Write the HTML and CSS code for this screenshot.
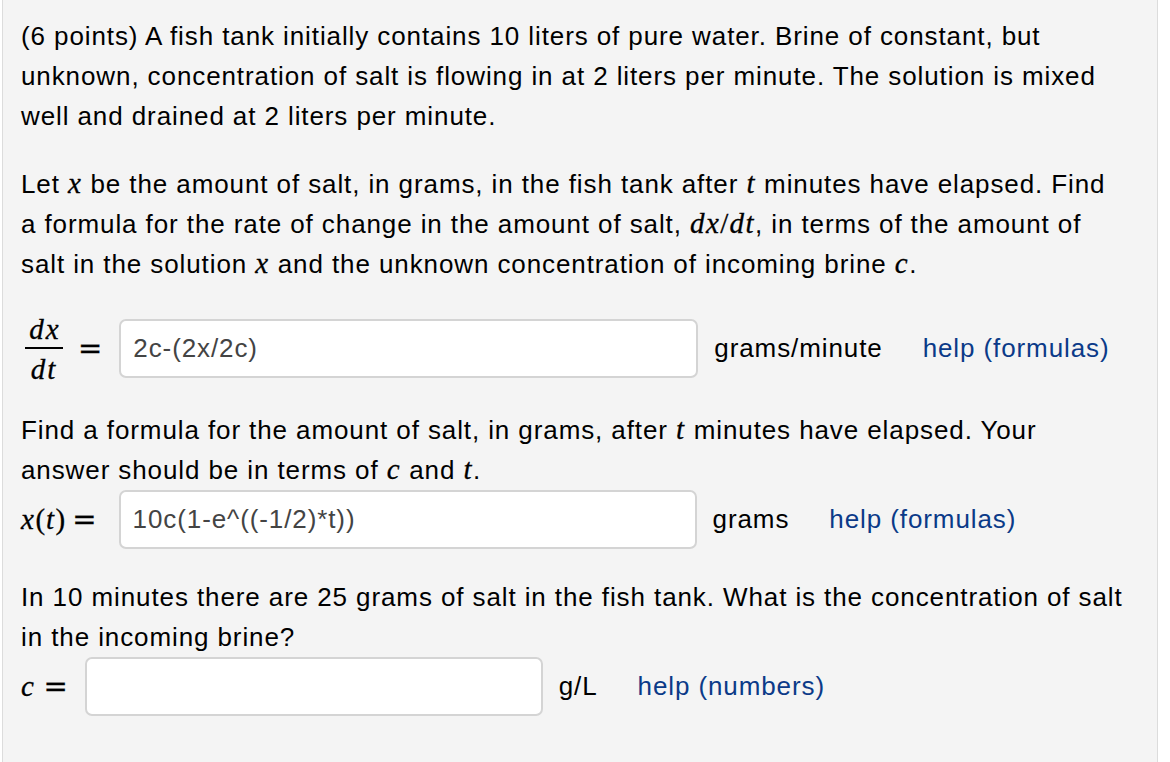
FILE: index.html
```html
<!DOCTYPE html>
<html>
<head>
<meta charset="utf-8">
<link rel="stylesheet" href="styles.css">
</head>
<body>
<div class="panel">
  <p class="para">(6 points) A fish tank initially contains 10 liters of pure water. Brine of constant, but unknown, concentration of salt is flowing in at 2 liters per minute. The solution is mixed well and drained at 2 liters per minute.</p>
  <p class="para gap">Let <span class="m">x</span> be the amount of salt, in grams, in the fish tank after <span class="m">t</span> minutes have elapsed. Find a formula for the rate of change in the amount of salt, <span class="m">dx</span><span class="mr">/</span><span class="m">dt</span>, in terms of the amount of salt in the solution <span class="m">x</span> and the unknown concentration of incoming brine <span class="m">c</span>.</p>
  <div class="row row-frac">
    <span class="frac"><span class="num m">dx</span><span class="den m">dt</span></span>
    <span class="eq eq-frac">=</span>
    <input class="answer a1" type="text" value="2c-(2x/2c)">
    <span class="unit">grams/minute</span>
    <a class="help" href="#">help (formulas)</a>
  </div>
  <p class="para">Find a formula for the amount of salt, in grams, after <span class="m">t</span> minutes have elapsed. Your answer should be in terms of <span class="m">c</span> and <span class="m">t</span>.</p>
  <div class="row">
    <span class="lhs"><span class="m">x</span><span class="mr">(</span><span class="m">t</span><span class="mr">)</span></span>
    <span class="eq">=</span>
    <input class="answer a2" type="text" value="10c(1-e^((-1/2)*t))">
    <span class="unit">grams</span>
    <a class="help" href="#">help (formulas)</a>
  </div>
  <p class="para gap2">In 10 minutes there are 25 grams of salt in the fish tank. What is the concentration of salt in the incoming brine?</p>
  <div class="row">
    <span class="lhs"><span class="m">c</span></span>
    <span class="eq eq-c">=</span>
    <input class="answer a3" type="text" value="">
    <span class="unit">g/L</span>
    <a class="help" href="#">help (numbers)</a>
  </div>
</div>
</body>
</html>
```

FILE: styles.css
```css
html, body {
  margin: 0;
  padding: 0;
  background: #ffffff;
}
body {
  font-family: "Liberation Sans", Arial, sans-serif;
  color: #000;
}
.panel {
  margin-left: 2px;
  width: 1136px;
  background: #f4f4f4;
  border-left: 1px solid #dcdcdc;
  border-right: 1px solid #dcdcdc;
  padding: 16px 0 60px 18px;
  height: 700px;
}
.para {
  margin: 0;
  font-size: 26px;
  letter-spacing: 0.9px;
  line-height: 40px;
  width: 1104px;
}
.gap {
  margin-top: 28px;
}
.gap2 {
  margin-top: 28px;
}
.m {
  font-family: "Liberation Serif", "Times New Roman", serif;
  font-style: italic;
  font-size: 29px;
  letter-spacing: 1.5px;
  line-height: 1;
  -webkit-text-stroke: 0.3px #000;
}
.mr {
  font-family: "Liberation Serif", "Times New Roman", serif;
  font-size: 29px;
  letter-spacing: 1px;
  line-height: 1;
  -webkit-text-stroke: 0.3px #000;
}
.row {
  display: flex;
  align-items: center;
  height: 59px;
}
.row-frac {
  margin: 35px 0 32px 0;
}
.frac {
  display: inline-flex;
  flex-direction: column;
  align-items: center;
  margin-left: 3px;
  width: 40px;
}
.frac .m {
  line-height: 34px;
  font-size: 29px;
  letter-spacing: 2px;
}
.num {
  border-bottom: 2px solid #000;
  padding: 0 2px 1px 4px;
}
.den {
  padding-top: 3px;
}
.eq {
  font-family: "DejaVu Serif", "Liberation Serif", serif;
  font-size: 29px;
  line-height: 1;
  margin: 0 0 0 6px;
  -webkit-text-stroke: 0.3px #000;
}
.eq-frac {
  margin-left: 14px;
}
.eq-c {
  margin-left: 8px;
}
.lhs {
  margin-left: 0;
  white-space: nowrap;
}
.answer {
  box-sizing: border-box;
  height: 59px;
  border: 2px solid #d4d4d4;
  border-radius: 7px;
  background: #fff;
  font-family: "Liberation Sans", Arial, sans-serif;
  font-size: 26px;
  letter-spacing: 0.9px;
  color: #444;
  padding: 0 12px;
  margin: 0 0 0 17px;
  outline: none;
}
.a1 { width: 579px; }
.a2 { width: 578px; margin-left: 22px; }
.a3 { width: 458px; }
.unit {
  font-size: 26px;
  letter-spacing: 0.9px;
  margin-left: 16px;
}
.help {
  font-size: 26px;
  letter-spacing: 0.9px;
  color: #0b3a88;
  text-decoration: none;
  margin-left: 40px;
}
```
